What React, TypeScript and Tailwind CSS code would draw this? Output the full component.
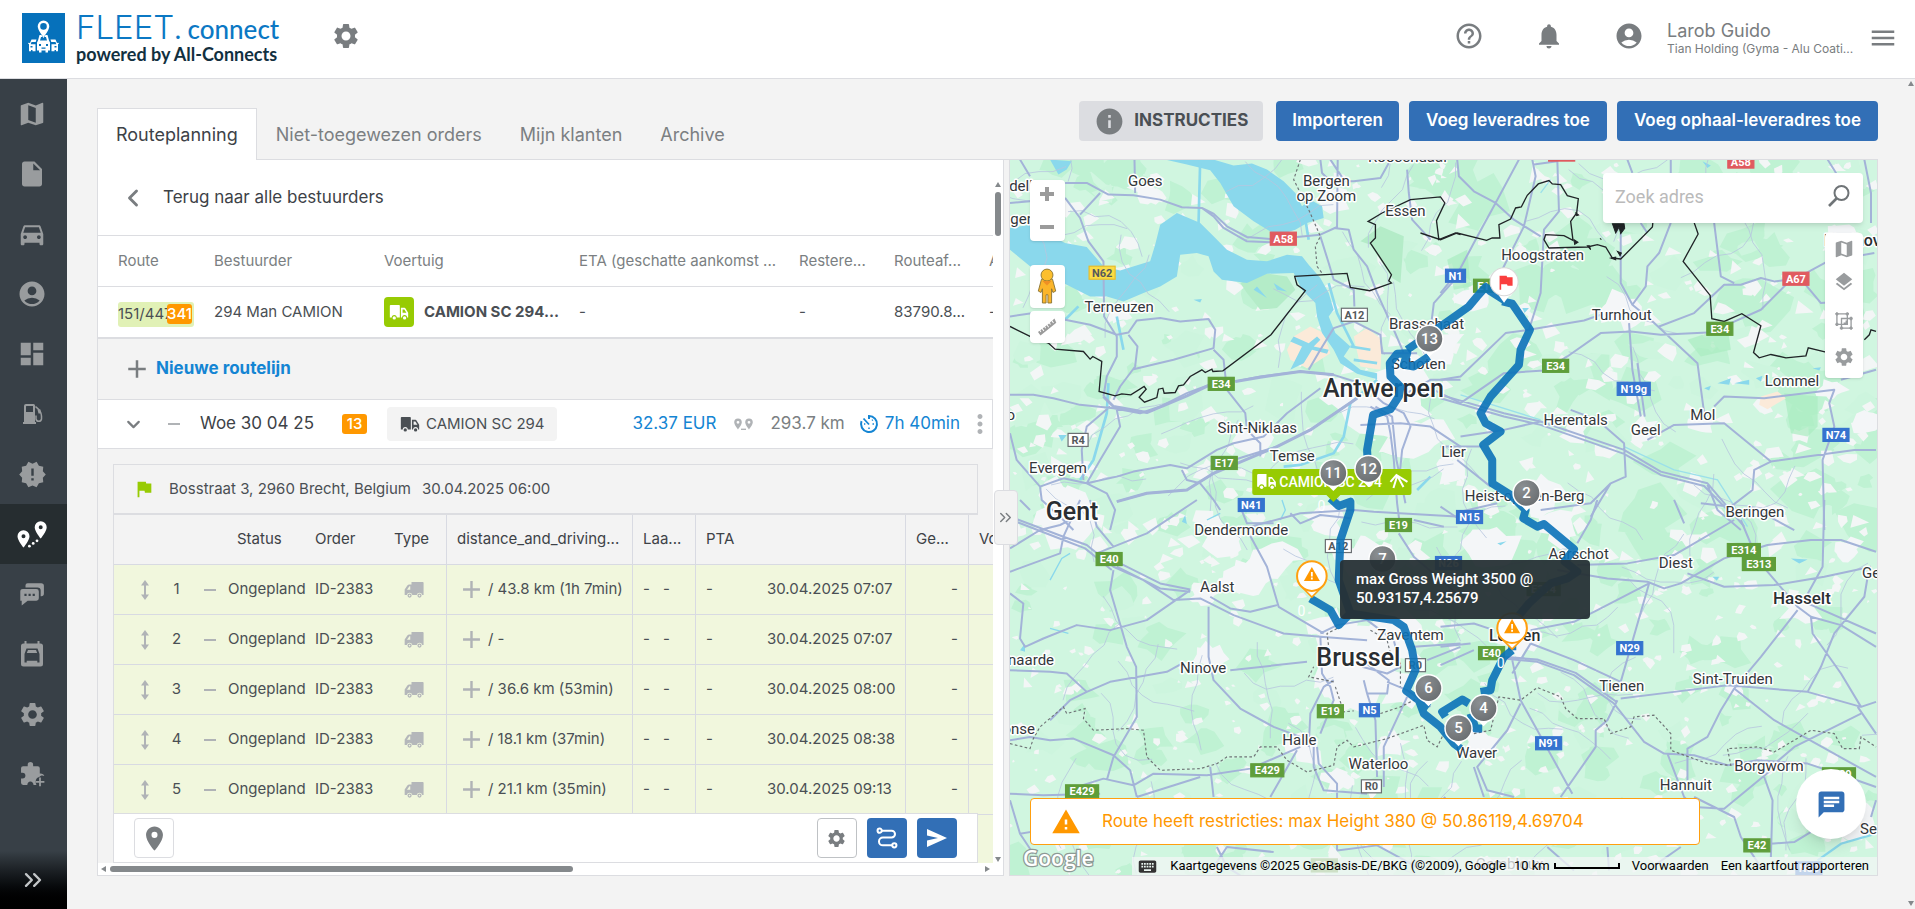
import React from "react";
import {
  MdSettings, MdHelpOutline, MdNotifications, MdAccountCircle, MdMenu, MdMap, MdInsertDriveFile,
  MdDirectionsCar, MdDashboard, MdNewReleases, MdFlag, MdInfo, MdWarning, MdLayers, MdKeyboard,
  MdLocationOn, MdChat, MdMoreVert, MdAdd,
} from "react-icons/md";
import { ChevronLeft, ChevronDown, ChevronsRight } from "lucide-react";

/* ---------- icons ---------- */

type IconProps = { className?: string };

const Truck = ({ className }: IconProps) => (
  <svg viewBox="0 0 24 21" fill="currentColor" className={className} aria-hidden="true">
    <path fillRule="evenodd" d="M2 2h10a1 1 0 0 1 1 1v14H9.3a3 3 0 0 0-6 0H1V3a1 1 0 0 1 1-1zM14.3 5.5h4.2a1.5 1.5 0 0 1 1.3.8L23 11.5V17h-1.3a3 3 0 0 0-6 0h-1.4zM16.3 7.5v4h4.6l-2.5-4z" />
    <circle cx="6.3" cy="17.6" r="2" />
    <circle cx="18.7" cy="17.6" r="2" />
  </svg>
);

const VanLeft = ({ className }: IconProps) => (
  <svg viewBox="0 0 24 20" fill="currentColor" className={className} aria-hidden="true">
    <path fillRule="evenodd" d="M9 1h13.5a1 1 0 0 1 1 1v14.5h-1.6a3.4 3.4 0 0 0-6.6 0H10a3.4 3.4 0 0 0-6.6 0H.8V10L4 5.2A3 3 0 0 1 6.4 4H9zM7.5 6h-1L3.6 10.2h3.9z" />
    <path fillRule="evenodd" d="M6.7 14.8a2.5 2.5 0 1 1 0 5 2.5 2.5 0 0 1 0-5zm0 1.5a1 1 0 1 0 0 2 1 1 0 0 0 0-2zM18.6 14.8a2.5 2.5 0 1 1 0 5 2.5 2.5 0 0 1 0-5zm0 1.5a1 1 0 1 0 0 2 1 1 0 0 0 0-2z" />
  </svg>
);

const RoutePins = ({ className }: IconProps) => (
  <svg viewBox="0 0 30 27" fill="currentColor" className={className} aria-hidden="true">
    <path fillRule="evenodd" d="M6.5 9.2a6 6 0 0 1 6 6c0 4.3-6 11.3-6 11.3s-6-7-6-11.3a6 6 0 0 1 6-6zm0 4a2 2 0 1 0 0 4 2 2 0 0 0 0-4zM23.7.3a6 6 0 0 1 6 6c0 4.3-6 11.3-6 11.3s-6-7-6-11.3a6 6 0 0 1 6-6zm0 4a2 2 0 1 0 0 4 2 2 0 0 0 0-4z" />
    <circle cx="12.4" cy="25.2" r="1.4" /><circle cx="16.2" cy="22.4" r="1.4" /><circle cx="20" cy="19.8" r="1.4" />
  </svg>
);

const SmallPins = ({ className }: IconProps) => (
  <svg viewBox="0 0 20 14" fill="currentColor" className={className} aria-hidden="true">
    <path fillRule="evenodd" d="M4 1.5a3.8 3.8 0 0 1 3.8 3.8C7.8 8 4 12.4 4 12.4S.2 8 .2 5.3A3.8 3.8 0 0 1 4 1.5zm0 2.4a1.4 1.4 0 1 0 0 2.8 1.4 1.4 0 0 0 0-2.8zM15 1.5a3.8 3.8 0 0 1 3.8 3.8c0 2.7-3.8 7.1-3.8 7.1s-3.8-4.4-3.8-7.1A3.8 3.8 0 0 1 15 1.5zm0 2.4a1.4 1.4 0 1 0 0 2.8 1.4 1.4 0 0 0 0-2.8z" />
    <path d="M7 11.6h5v1.4H7z" />
  </svg>
);

const FuelPump = ({ className }: IconProps) => (
  <svg viewBox="0 0 24 24" fill="currentColor" className={className} aria-hidden="true">
    <path fillRule="evenodd" d="M6 2h7.5A1.5 1.5 0 0 1 15 3.5V20h1v2H3v-2h1V4a2 2 0 0 1 2-2zm.5 2a.5.5 0 0 0-.5.5V10h7V4z" />
    <path d="M15.5 4.5c2.5 2 6 4.5 6 9.5v3a2.8 2.8 0 0 1-5.5 0v-3.5" fill="none" stroke="currentColor" strokeWidth="1.5" />
    <path d="M17.5 7.5h3v4h-2z" />
  </svg>
);

const Messages = ({ className }: IconProps) => (
  <svg viewBox="0 0 24 24" fill="currentColor" className={className} aria-hidden="true">
    <path d="M8 2h12.5A2.5 2.5 0 0 1 23 4.5v7a2.5 2.5 0 0 1-2.5 2.5H20V9a3 3 0 0 0-3-3H6V4a2 2 0 0 1 2-2z" />
    <path fillRule="evenodd" d="M3.5 7.3h12.5A2.3 2.3 0 0 1 18.3 9.6v6.3a2.3 2.3 0 0 1-2.3 2.3H8L2.5 22.5v-4.3H1.2V9.6a2.3 2.3 0 0 1 2.3-2.3zM5 11.8v2h2v-2zm3.8 0v2h2v-2zm3.8 0v2h2v-2z" />
  </svg>
);

const CarCalendar = ({ className }: IconProps) => (
  <svg viewBox="0 0 24 26" fill="currentColor" className={className} aria-hidden="true">
    <path fillRule="evenodd" d="M4.5 0h2v2.5h11V0h2v2.5h1A2.5 2.5 0 0 1 23 5v18a2.5 2.5 0 0 1-2.5 2.5h-17A2.5 2.5 0 0 1 1 23V5a2.5 2.5 0 0 1 2.5-2.5h1zM6.5 7.5 4.5 13v8.5h2.2v-1.8h10.6v1.8h2.2V13l-2-5.5zM8 9h8l1.2 3H6.8z" />
  </svg>
);

const PuzzlePlus = ({ className }: IconProps) => (
  <svg viewBox="0 0 24 24" fill="currentColor" className={className} aria-hidden="true">
    <path d="M10 0a2.6 2.6 0 0 1 2.6 2.6V4H17a2 2 0 0 1 2 2v5c2.5-.2 4 1 4.3 2.5-1.5-1-4-.5-4.8 1-2 .3-3.5 2-3.5 4.5 0 1 .2 2 .8 3H13c-.2-2-1.3-3.2-3-3.2S7.2 20 7 22H3a2 2 0 0 1-2-2v-4.2h1.4a2.8 2.8 0 0 0 0-5.6H1V6a2 2 0 0 1 2-2h4.4V2.6A2.6 2.6 0 0 1 10 0z" />
    <path d="M19.2 14.8v8.4M15 19h8.4" stroke="currentColor" strokeWidth="1.7" />
  </svg>
);

const DragArrows = ({ className }: IconProps) => (
  <svg viewBox="0 0 10 20" fill="currentColor" className={className} aria-hidden="true">
    <path d="M5 0l4 5.5H6v9h3L5 20l-4-5.500h3v-9H1z" />
  </svg>
);

const Magnifier = ({ className }: IconProps) => (
  <svg viewBox="0 0 24 24" fill="none" stroke="currentColor" className={className} aria-hidden="true">
    <circle cx="14.5" cy="9" r="7" strokeWidth="2" />
    <path d="M9.5 14.5 2 22" strokeWidth="2.6" />
  </svg>
);

const Timer = ({ className }: IconProps) => (
  <svg viewBox="0 0 20 20" fill="none" stroke="currentColor" className={className} aria-hidden="true">
    <path d="M10 5V2a8 8 0 1 1-7.5 5.2" strokeWidth="2" />
    <path d="m4.5 4.5 5.5 6" strokeWidth="1.8" />
    <path d="M13.5 10h1.5M5 10h1.3M10 13.5V15M13 6.5l.8-.8" strokeWidth="1.5" />
  </svg>
);

const RouteLine = ({ className }: IconProps) => (
  <svg viewBox="0 0 24 24" fill="none" stroke="currentColor" strokeWidth="2.2" className={className} aria-hidden="true">
    <circle cx="4" cy="4" r="2.3" /><circle cx="20" cy="20" r="2.3" />
    <path d="M6.3 4H17a3.5 3.5 0 0 1 0 7.5H7.5a4 4 0 0 0 0 8.500h10" />
  </svg>
);

const GroupIcon = ({ className }: IconProps) => (
  <svg viewBox="0 0 24 24" fill="none" stroke="currentColor" className={className} aria-hidden="true">
    <path d="M3.5 3.5h12.5v12.5H3.5z" strokeWidth="1.6" />
    <path d="M9 9h11.5v11.5H9z" strokeWidth="1.6" />
    <path d="M1.5 3.5h4M3.5 1.5v4M14 3.5h4M16 1.5v4M1.5 16h4M3.5 14v4" strokeWidth="2.2" />
    <path d="M18.5 20.5h4M20.5 18.5v4M18.5 9h4M20.5 7v4M7 20.5h4M9 18.5v4" strokeWidth="2.2" />
    <path d="M11.5 15h3.5v-3.5" strokeWidth="2.2" />
  </svg>
);

const RulerIcon = ({ className }: IconProps) => (
  <svg viewBox="0 0 20 20" fill="currentColor" className={className} aria-hidden="true">
    <path d="M1 15 2.5 13.8l1 1.4.8-.6-1-1.4 1.6-1.2 1.6 2.2.8-.6-1.6-2.2 1.6-1.3 1 1.4.8-.6-1-1.4 1.6-1.2 1.6 2.2.8-.6-1.6-2.2 1.6-1.3 1 1.4.8-.6-1-1.4L14.5 4l1.6 2.2.8-.6L15.3 3.4 17.5 1.5l1.8 4.3L3.5 18.5z" />
  </svg>
);

const LogoMark = () => (
  <svg viewBox="0 0 43 50" className="h-[50px] w-[43px]" aria-hidden="true">
    <path fill="#0671bb" d="M0 0h43v50H0z" />
    <g fill="#fff">
      <path fillRule="evenodd" d="M21.5 7.5a5.8 5.8 0 0 1 5.8 5.8c0 4-5.8 11-5.8 11s-5.8-7-5.8-11a5.8 5.8 0 0 1 5.8-5.8zm0 2.6a3.3 3.3 0 1 0 0 6.6 3.3 3.3 0 0 0 0-6.6z" />
      <path fillRule="evenodd" d="M17.5 22h2l2 3 2-3h2l1.5 5.500 1 2v8h-2v2h-2.500v-2h-4v2H17v-2h-2v-8l1-2zm.5 5.500h7l-1-3.500h-5zM17 31v2h2v-2zm7 0v2h2v-2zm-4.500 3.500v1.200h4v-1.200z" />
      <path fillRule="evenodd" d="M9.5 26.500h5l-.8 2.500h-4.200l-.8 2.200h4.800v7h-3v-1.200H9v1.200H7v-7l-1-.6.6-.9 1.400.3zM8.500 33v1.500h2V33zM33.500 26.500h-5l.8 2.500h4.200l.8 2.200h-4.800v7h3v-1.200H34v1.200h2v-7l1-.6-.6-.9-1.400.3zM34.500 33v1.500h-2V33z" />
    </g>
  </svg>
);

/* ---------- map ---------- */

function makeRandom(seed: number) {
  let s = seed;
  return () => {
    s = (s * 1664525 + 1013904223) % 4294967296;
    return s / 4294967296;
  };
}

function blob(rand: () => number, cx: number, cy: number, r: number, n: number) {
  let d = "";
  for (let i = 0; i < n; i++) {
    const a = (i / n) * Math.PI * 2 + rand() * 0.5;
    const k = r * (0.45 + rand() * 0.75);
    d += (i ? "L" : "M") + (cx + Math.cos(a) * k).toFixed(1) + " " + (cy + Math.sin(a) * k * 0.8).toFixed(1);
  }
  return d + "Z";
}

const rnd = makeRandom(77);
let forest = "";
let meadow = "";
let patches = "";
let lanes = "";
for (let i = 0; i < 260; i++) {
  const x = 1010 + rnd() * 865;
  const y = 160 + rnd() * 715;
  forest += blob(rnd, x, y, 8 + rnd() * (x > 1440 && y < 560 ? 30 : 17), 9);
}
for (let i = 0; i < 90; i++) meadow += blob(rnd, 1010 + rnd() * 865, 160 + rnd() * 715, 8 + rnd() * 20, 8);
for (let i = 0; i < 900; i++) {
  const x = 1010 + rnd() * 865;
  const y = 160 + rnd() * 715;
  const dense = y < 560 ? 10 : 6;
  patches += blob(rnd, x, y, 2 + rnd() * dense, 3 + Math.floor(rnd() * 4));
}
for (let i = 0; i < 95; i++) {
  let x = 1010 + rnd() * 865;
  let y = 160 + rnd() * 715;
  let a = rnd() * 6.28;
  lanes += `M${x.toFixed(0)} ${y.toFixed(0)}`;
  for (let k = 0; k < 7; k++) {
    a += (rnd() - 0.5) * 1.1;
    x += Math.cos(a) * 14;
    y += Math.sin(a) * 14;
    lanes += `L${x.toFixed(0)} ${y.toFixed(0)}`;
  }
}
const urbanSpots: [number, number, number][] = [
  [1385, 410, 44], [1400, 380, 36], [1420, 440, 32], [1345, 395, 26], [1070, 520, 38], [1060, 500, 30], [1082, 470, 14],
  [1365, 665, 52], [1385, 640, 42], [1350, 690, 32], [1330, 630, 26], [1400, 690, 26], [1305, 750, 22], [1257, 440, 22],
  [1625, 310, 26], [1440, 345, 24], [1270, 560, 30], [1250, 575, 26], [1225, 540, 22], [1120, 315, 14], [1145, 190, 16], [1332, 200, 18],
  [1520, 640, 22], [1800, 610, 24], [1840, 240, 22], [1205, 595, 16], [1210, 655, 18], [1640, 430, 18], [1575, 430, 16],
  [1470, 300, 18], [1480, 740, 20], [1855, 820, 22], [1675, 560, 12], [1865, 420, 18], [1735, 690, 10], [1540, 500, 28],
  [1560, 530, 26], [1490, 545, 28], [1325, 520, 22], [1360, 560, 26], [1830, 390, 16], [1340, 780, 18], [1700, 425, 14],
  [1390, 745, 18], [1450, 470, 18], [1845, 550, 18],
];
let urban = "";
urbanSpots.forEach(([x, y, r]) => { urban += blob(rnd, x, y, r, 13); });

const majorNW =
  "M195 100L260 100 325 135 400 137 480 150 545 173 605 175 640 200 670 235 740 275 810 278M605 175L640 192 680 230 740 262 810 268M890 262L960 255 1010 232 1012 30M195 145L240 205 265 275 310 335 312 500 350 560 350 620 320 680 310 740M300 130L240 195M403 30L405 130M30 160L90 155M30 500L100 490M195 510L270 525 350 555 385 548 410 512 480 505 540 515 625 508 645 540 640 595 520 630 400 658M640 600L670 630 680 720 735 790 740 840 780 880 780 920M385 555L412 590 405 650 360 710 340 750M30 735L100 735 160 745 240 765 340 775 420 790 480 770 560 730 640 700M705 695L780 680 900 665 1000 675 1080 700 1150 760M350 1055L440 1030 560 1020 640 970 700 930 830 890 930 840 1070 745M260 1000L350 980 400 965 510 945 560 955 650 900 700 880 790 860 860 790 960 715M545 960L560 990 600 1000 640 1050 660 1080M1110 770L1160 800 1170 850 1180 930 1190 1060 1200 1140M1125 770L1175 800 1188 930 1215 1060M1080 825L1200 820 1290 830 1380 890M1150 760L1210 790 1230 830 1205 900 1195 1000M1380 690L1290 690 1200 740M1205 740L1300 720 1380 760M925 660L960 600 1000 535 1060 515 1140 555 1145 610 1250 610M960 260L985 340 1000 390 1060 420 1062 470M1000 235L1045 240 1060 300 1100 350 1130 430 1180 540 1210 610M1290 540L1300 460 1380 370M120 1010L190 985 260 1000 320 1030 345 1080 330 1140M120 1010L125 1050 190 1110 220 1140M30 850L50 930 120 1010M330 770L260 830 245 900 250 990M350 780L360 830 300 930 260 1000M750 1130L900 1090 1060 1080 1120 1085 1380 1100M960 30L965 70 990 95 1060 95 1140 85 1165 40M990 30L1030 90M1220 60L1225 130 1235 210 1290 270M60 30L90 80";
const majorNE =
  "M0 430L60 355 105 270 165 160 235 30M275 30L285 80 250 230 180 370M350 30L355 185 310 240 300 430 265 540M50 30L55 80 100 125 165 160 220 210 300 260M265 540L430 512 480 495M60 760L190 670 310 662 380 620 480 550 570 545 660 555 800 548M870 520L960 480 1040 400 1160 335 1300 310M0 690L60 680 195 550 265 540M0 735L190 790 300 815 550 900 660 965 800 1000 910 1130M0 745L190 800 300 825 550 912 660 975 790 1008 860 1080M540 250L540 400 575 465 630 510 770 640 790 790M690 220L655 310 620 350 615 410 575 465M565 520L575 660 600 800M590 640L612 800M655 530L760 490 850 405 900 405 960 385 1000 395 1040 390M820 220L840 380 880 400M1090 400L1140 460 1200 455M390 780L470 810 550 880 555 980 510 1000 450 1100M620 870L700 825 850 820 990 935 1240 900 1305 900M820 770L850 740 970 745 1180 720 1165 760 1180 830 1145 930 1150 1140M0 890L100 890 125 890M50 930L150 1010M60 860L190 840 300 815M990 935L940 960 935 1020 870 1070 780 1060M60 1085L170 1060M300 1080L450 1060 510 1000M1270 30L1290 130 1290 220M1200 690L1305 660M560 30L575 70M690 30L690 70M280 45L350 35M1160 30L1210 110M600 220L620 250M800 1005L830 1080 900 1140";
const majorSW =
  "M30 50L190 110 260 135 340 200 430 240 520 300 600 295 700 345 850 400 960 410 1100 420M30 58L190 120 255 145 335 210M30 215L180 160 190 110 240 0M30 145L120 90 180 75 230 50M290 160L440 100 590 0M60 0L90 30M270 0L290 80 340 140M350 200L480 265 570 275M360 190L480 250 570 268M340 210L330 270 380 440 408 500 410 650 340 770 320 840M30 510L150 515 200 520 260 575 330 545 500 515 545 490M30 280L70 310 60 415 75 440 130 415 230 375 330 390 440 360 570 270M150 660L210 600 260 575M625 320L625 470 640 540 720 625 820 680 900 710M735 80L800 200 835 320 970 400M630 290L690 325 750 335 830 315M690 510L920 485M30 720L90 710 150 720 220 715 280 740 340 765 390 810 410 890M30 880L130 885 300 880M200 870L310 835 400 855 460 820 620 825 750 805 900 740M410 890L600 830M640 890L630 800M810 890L890 750M925 740L930 640 970 560 1000 540M950 740L955 790 1010 850 1010 1050M940 740L940 800 970 870 1100 880M960 410L965 520 990 560 1000 600 960 700M960 400L1010 375 1100 360 1180 420 1200 500 1160 520 1085 500M1090 540L1100 580 1160 580 1165 540 1085 480M1160 545L1220 570 1290 620M1100 580L1125 660 1130 830M1220 590L1150 740 1150 860M1380 430L1240 440M30 900L60 1000 100 1060M60 1000L120 990M640 1100L680 1040 820 1055M1010 1050L1130 1035 1250 1100M1195 100L1240 170 1380 290M870 40L900 70 960 45 1050 55M1240 60L1330 80M720 20L740 70 820 70M1380 60L1320 20M1280 480L1380 440M650 1040L680 1100 720 1125M1380 940L1330 890";
const majorSE =
  "M350 210L500 235 620 245 670 265 720 250 850 175 980 135 1110 120 1200 120 1305 155M0 440L90 430M190 475L290 485 400 525 520 610 610 725 670 760 760 765 860 795 950 780 1100 790 1220 830 1305 860M190 470L290 478 405 518 525 603M270 430L400 480 540 545 625 250M270 390L400 365 470 330 625 250M540 595L700 575 860 555 1100 575 1260 620 1305 605M880 565L840 630 800 710 740 745 740 840M880 565L1000 660 1305 830M900 60L950 180 1070 320 1110 350 1200 375 1305 440M880 60L700 165 560 190 410 195M740 220L850 260 1000 255 1150 230 1290 200M1070 330L960 470 880 565M1110 350L1115 400 1200 520 1260 620M1090 300L1145 200 1150 0M1100 310L1305 400M1100 575L1140 500 1180 400 1270 290 1280 230M530 600L500 660 465 690 465 740 360 890M215 480L240 600 290 690 395 880M270 430L215 520M240 610L200 690 110 800 140 870 220 890M100 800L130 890M680 760L730 890 760 920 850 925 990 810M760 890L880 950 900 1010 960 1100M970 830L995 900 990 1070M1250 620L1305 700M1260 640L1060 740 990 800M990 1030L1060 1025 1200 940M0 380L100 370 160 390M0 495L100 450M320 1040L400 1110M720 1040L620 1110M500 1040L505 1110M930 20L1060 90M410 130L450 60 470 0M700 0L730 70M1305 900L1290 950";

const trunkNW = "M310 740L340 770 440 788 560 738 640 700M705 695L780 682 900 665 1000 675M350 1055L440 1030 560 1020 640 970 830 890 930 840 1070 745";

type Label = [string, number, number, ("start" | "end")?];
const towns: Label[] = [
  ["Goes", 1145, 181], ["Bergen", 1326, 181], ["op Zoom", 1326, 196], ["Roosendaal", 1407, 157], ["Essen", 1405, 211],
  ["Hoogstraten", 1542, 255], ["Terneuzen", 1119, 307], ["Turnhout", 1621, 315], ["Brasschaat", 1426, 324],
  ["Schoten", 1418, 364], ["Sint-Niklaas", 1257, 428], ["Temse", 1292, 456], ["Evergem", 1058, 468], ["Lier", 1453, 452],
  ["Herentals", 1575, 420], ["Geel", 1645, 430], ["Mol", 1702, 415], ["Lommel", 1791, 381], ["Beringen", 1754, 512],
  ["Heist-op-den-Berg", 1524, 496], ["Dendermonde", 1241, 530], ["Aalst", 1217, 587], ["Aarschot", 1578, 554],
  ["Diest", 1675, 563], ["Genk", 1861, 573, "start"], ["Zaventem", 1410, 635], ["Ninove", 1203, 668],
  ["Oudenaarde", 1054, 660, "end"], ["Ronse", 1035, 729, "end"], ["Halle", 1299, 740], ["Waterloo", 1378, 764],
  ["Waver", 1476, 753], ["Tienen", 1621, 686], ["Sint-Truiden", 1732, 679], ["Hannuit", 1685, 785],
  ["Borgworm", 1768, 766], ["Gembloux", 1509, 864], ["Seraing", 1859, 829, "start"], ["Middelburg", 984, 186, "start"],
  ["Vlissingen", 1035, 219, "end"], ["Eeklo", 1015, 415, "end"],
];

type Shield = [string, number, number, "g" | "b" | "r" | "y" | "w"];
const shields: Shield[] = [
  ["A58", 1283, 239, "r"], ["N62", 1102, 273, "y"], ["A12", 1354, 315, "w"], ["N1", 1455, 276, "b"], ["E34", 1221, 384, "g"],
  ["R4", 1078, 440, "w"], ["E17", 1224, 463, "g"], ["N41", 1251, 505, "b"], ["E19", 1398, 525, "g"], ["A12", 1338, 546, "w"],
  ["E40", 1109, 559, "g"], ["E19", 1330, 711, "g"], ["N5", 1369, 710, "b"], ["R0", 1415, 665, "w"], ["R0", 1371, 786, "w"],
  ["E429", 1267, 770, "g"], ["E429", 1082, 791, "g"], ["E19", 1486, 286, "g"], ["A67", 1795, 279, "r"], ["E34", 1719, 329, "g"],
  ["E34", 1555, 366, "g"], ["N19g", 1633, 389, "b"], ["N74", 1835, 435, "b"], ["N15", 1469, 517, "b"], ["E314", 1743, 550, "g"],
  ["E313", 1758, 564, "g"], ["N29", 1629, 648, "b"], ["E40", 1491, 653, "g"], ["N91", 1548, 743, "b"], ["E42", 1756, 845, "g"],
  ["N26", 1448, 563, "b"], ["E429", 1838, 774, "g"], ["A58", 1740, 162, "r"], ["A58", 1561, 155, "r"], ["E314", 1543, 589, "g"],
  ["E19", 1324, 865, "g"], ["N80", 1808, 868, "b"],
];
const shieldColor = { g: "#5f9e3b", b: "#3573cf", r: "#e05a5f", y: "#fbdc45", w: "#ffffff" };

const stops: [string, number, number][] = [
  ["7", 1382, 559], ["13", 1429, 339], ["12", 1368, 469], ["11", 1333, 473], ["2", 1526, 493], ["6", 1428, 688], ["4", 1483, 708], ["5", 1458, 728],
];

const Q1 = "translate(1000 150) scale(.33333)";
const Q2 = "translate(1440 150) scale(.33333)";
const Q3 = "translate(1000 500) scale(.33333)";
const Q4 = "translate(1440 500) scale(.33333)";

function MapDrawing() {
  const halo = { stroke: "#fff", strokeWidth: 3, strokeLinejoin: "round" as const, paintOrder: "stroke" as const };
  return (
    <svg viewBox="1010 160 866 715" preserveAspectRatio="xMidYMid slice" className="absolute inset-0 h-full w-full" role="img" aria-label="Routekaart">
      <defs>
        <radialGradient id="stopFill" cx=".35" cy=".3" r=".8">
          <stop offset="0" stopColor="#8b8f92" /><stop offset="1" stopColor="#686c6f" />
        </radialGradient>
      </defs>
      <path d="M1010 160h866v715h-866z" fill="#d0f6e0" />
      <path d={forest} fill="#bff2d3" />
      <path d={meadow} fill="#cdf5de" />
      <path d={patches} fill="#f3f6f6" />
      <path d={urban} fill="#f4f6f8" />
      <g transform={Q1}>
        <path fill="#b4ecc8" d="M1080 275L1140 230 1210 260 1200 400 1175 385 1110 285zM720 400L790 370 860 380 885 420 830 475 780 480 740 430z" />
        <path fill="#fbead9" d="M860 600L880 560 930 530 970 550 990 610 920 655 870 630zM1060 560L1100 535 1145 570 1140 660 1080 650z" />
        <g fill="#8ad8ec">
          <path d="M30 235L90 225 195 280 260 292 310 350 360 362 450 335 465 285 480 225 530 190 600 220 640 260 680 300 740 330 800 335 860 315 905 320 925 345 960 385 985 430 1000 480 985 500 1005 550 1050 590 1030 620 1080 660 1130 670 1130 688 1070 672 1020 640 1000 600 965 550 950 500 945 460 905 420 880 370 800 372 740 400 665 390 640 365 625 320 590 310 540 315 530 380 480 410 430 430 370 455 320 440 270 440 240 425 190 400 90 350 30 300z" />
          <path d="M495 30L640 30 700 48 755 42 800 60 850 95 885 130 905 170 930 150 965 170 970 205 920 220 885 240 830 258 760 215 700 170 660 100 630 62 560 45z" />
          <path d="M150 30L215 35 200 60 175 75zM870 660L905 590 870 575 880 560 925 580 950 560 960 570 940 590 985 600 980 612 935 600 910 640zM175 855L200 855 185 875zM580 450L605 448 600 458zM760 420L770 410 800 445zM820 400L860 425 830 420z" />
        </g>
        <path fill="none" stroke="#8ad8ec" strokeWidth="8" d="M1130 690L1050 760 1030 860 1000 910 900 945 850 950M325 700L320 790 280 930 240 990M985 400L1010 490 1060 590M1050 590L1110 600M1060 630L1130 640M235 470L195 510M600 30L595 220M925 270L910 180M350 500L370 600M1290 980L1250 1020" />
      </g>
      <g transform={Q2} fill="#8ad8ec">
        <path d="M830 700L870 685 865 705zM880 700L925 690 925 705zM945 685L965 678 960 695zM790 715L810 708 805 722zM1115 655L1140 652 1135 662zM245 475L265 475 252 490zM785 35L810 48 800 55z" />
        <path fill="#a9ecc1" opacity=".7" d="M1030 730L1130 740 1130 830 1100 860 1050 850zM740 570L860 530 870 600 780 620zM20 330L80 300 90 410 40 420z" />
        <path fill="none" stroke="#9be0ea" strokeWidth="4" d="M60 735L300 810M550 890L700 960 830 990 920 1130M330 90L300 130" />
        <path fill="#fbead9" d="M960 740L1010 725 1035 745 980 778 955 765z" />
      </g>
      <g transform={Q4} fill="#8ad8ec">
        <path d="M1050 175L1100 178 1075 190zM815 230L835 230 828 242zM170 130L198 124 180 136z" />
        <path fill="none" stroke="#8ad8ec" strokeWidth="7" d="M1305 1000L1200 1030 1130 1080" />
      </g>
      <g transform={Q3} fill="#8ad8ec">
        <path d="M545 65L555 45 560 72zM60 450L75 430 75 455z" />
        <path fill="none" stroke="#8ad8ec" strokeWidth="4" d="M150 240L185 175 210 160M845 0L855 30 840 60M150 385L205 400M620 60L660 40" />
      </g>
      <path d={lanes} fill="none" stroke="#b7c5df" strokeWidth="0.8" />
      <g fill="none" stroke="#a3b3d8" strokeWidth="6" strokeLinejoin="round">
        <g transform={Q1}><path d={majorNW} /><path d={trunkNW} strokeWidth="9" /></g>
        <g transform={Q2}><path d={majorNE} /></g>
        <g transform={Q3}><path d={majorSW} /></g>
        <g transform={Q4}><path d={majorSE} /></g>
      </g>
      <g fill="none" stroke="#6f7477" strokeWidth="3.5" strokeDasharray="8 7">
        <path transform={Q1} d="M900 30L880 90 925 180 960 260 945 290 950 350 965 370" />
        <path transform={Q3} d="M30 730L90 745 100 715 120 680 190 620 200 640 255 625 250 655 280 690 380 685 430 690 440 770 480 810 600 805 650 790 680 770 760 770 780 740 830 740 860 780 920 815 1000 795 1010 740 1040 720 1060 740 1160 715 1270 675 1280 720 1310 740 1340 680M1010 385L980 400 985 440M1000 545L925 530 940 500M1005 560L1030 635 1060 632M1140 640L1200 620 1260 590M1110 390L1160 420 1170 460 1200 490 1200 560" />
        <path transform={Q4} d="M100 700L150 690 175 590 240 600 290 562 360 590 375 625 410 655 490 655 510 700 570 680 580 650 640 645 690 700 690 750 800 790 870 795 860 745 950 740 1000 755 1060 720 1110 690 1180 700 1205 745 1255 745 1260 710 1305 740" />
      </g>
      <g fill="none" stroke="#202427" strokeWidth="4">
        <path transform={Q1} d="M30 530L90 560 145 580 165 598 250 605 270 628 278 620 305 635 297 725 345 738 365 732 392 735 432 710 438 718 417 742 433 757 470 743 475 718 488 715 492 730 525 728 535 708 550 705 570 680 605 660 615 668 635 658 638 665 668 663 812 555 915 423 890 405 883 380 1040 371 1050 413 1108 423 1173 400 1165 393 1173 375 1110 280 1125 265 1125 225 1103 215 1145 190 1230 150 1320 142 1333 160 1308 213 1315 270 1365 250 1380 255" />
        <path transform={Q2} d="M-60 250L0 270 50 250 138 272 155 265 178 265 175 225 210 208 225 175 242 172 260 137 293 103 325 93 335 103 360 105 380 138 413 147 408 190 390 215 397 272 370 258 315 255 310 270 325 295 440 292 470 285 495 292 515 325 540 328 635 232 640 180M757 210L772 253 727 335 808 437 813 507 850 515 903 492 960 528 938 608 955 624 990 614 1035 624 1095 618 1102 594 1155 607M1270 570L1285 555 1290 540 1305 545" />
        <path transform={Q2} fill="#202427" strokeWidth="3" d="M515 222L525 250 535 232 540 252 552 236 550 222zM400 270L412 278 402 284zM440 288L450 300 446 288zM510 325L525 330 525 322zM530 305L542 310 538 318zM478 266L482 270zM406 190L414 196 408 198z" />
      </g>
      <g fontFamily="Roboto, sans-serif" fontWeight="400" fontSize="15" fill="#33373b" {...halo}>
        {towns.map(([t, x, y, a]) => (
          <text key={t} x={x} y={y + 5} textAnchor={a ?? "middle"}>{t}</text>
        ))}
      </g>
      <g fontFamily="Roboto, sans-serif" fontWeight="500" fill="#2a2e32" textAnchor="middle" {...halo}>
        <text x="1383" y="397" fontSize="25">Antwerpen</text>
        <text x="1072" y="520" fontSize="25">Gent</text>
        <text x="1358" y="666" fontSize="25">Brussel</text>
        <text x="1801" y="604" fontSize="17">Hasselt</text>
        <text x="1514" y="641" fontSize="16">Leuven</text>
        <text x="1823" y="246" fontSize="16" textAnchor="start">Eindhoven</text>
      </g>
      <g fontFamily="Roboto, sans-serif" fontWeight="700" fontSize="11" textAnchor="middle">
        {shields.map(([t, x, y, c], i) => {
          const w = t.length * 6 + (t.length > 3 ? 9 : 8);
          return (
            <g key={i}>
              <rect x={x - w / 2} y={y - 6.5} width={w} height="13" fill={shieldColor[c]} stroke={c === "w" ? "#6b6f73" : c === "y" ? "#e8bd2b" : shieldColor[c]} strokeWidth="1.2" />
              <text x={x} y={y + 4} fill={c === "w" || c === "y" ? "#55595c" : "#fff"}>{t}</text>
            </g>
          );
        })}
      </g>
      <g fill="none" stroke="#0b72b8" strokeOpacity=".9" strokeWidth="24" strokeLinejoin="round">
        <path transform={Q2} d="M190 450L150 425 135 412 110 440 85 470 0 530 -100 600M185 455L215 462 268 540 240 600 235 645 150 740 120 790 135 820 180 845 128 885 155 930 155 1000 210 1035 255 1080 248 1105 290 1130 310 1122 400 1197 372 1235 410 1265 380 1285 330 1300 265 1360 215 1420 215 1500" />
        <path transform={Q1} d="M1285 620L1240 650 1210 645 1220 610 1190 612 1168 640 1170 680 1200 710 1195 740 1170 778 1118 795 1100 900 1105 1000M990 1045L1015 1068 1050 1055 1050 1080 1020 1170 1015 1290 1050 1390 1180 1410 1210 1430 1235 1500 1245 1560 1217 1622 1255 1650 1270 1690 1320 1730 1360 1780 1380 1795M930 1345L990 1380 1015 1425 1050 1390M1225 1628L1285 1672M1335 1700L1325 1685 1385 1648 1405 1660" />
        <path transform={Q4} d="M215 450L190 470 155 540 150 570 120 575M125 685L105 685 90 640" />
      </g>

      {/* vehicle flag */}
      <path d="M1254 469h155a2 2 0 0 1 2 2v22a2 2 0 0 1-2 2h-69l-7 7-7-7h-72a2 2 0 0 1-2-2v-22a2 2 0 0 1 2-2z" fill="#97cb03" />
      <g transform="translate(1256 474) scale(.85)" fill="#fff">
        <path fillRule="evenodd" d="M2 0h10v15H9.3a3 3 0 0 0-6 0H1V1zM14.3 3.5h4.2L23 9.5V15h-1.3a3 3 0 0 0-6 0h-1.4zM16.3 5.5v4h4.6l-2.5-4z" />
        <circle cx="6.3" cy="15.6" r="2" /><circle cx="18.7" cy="15.6" r="2" />
      </g>
      <text x="1279" y="487" fontFamily="Roboto, sans-serif" fontWeight="500" fontSize="14" fill="#fff">CAMION SC 294</text>
      <path d="M1393 488l4-13M1390 482l6-7 11 7M1397 476l6 11" stroke="#fff" strokeWidth="2" fill="none" />

      {stops.map(([n, x, y]) => (
        <g key={n}>
          <path d={`M${x - 6} ${y + 12}L${x} ${y + 18}L${x + 6} ${y + 12}z`} fill="#fff" />
          <circle cx={x} cy={y} r="13.5" fill="url(#stopFill)" stroke="#fff" strokeWidth="1.5" />
          <text x={x} y={y + 5} textAnchor="middle" fontFamily="Roboto, sans-serif" fontWeight="500" fontSize="15" fill="#fff">{n}</text>
        </g>
      ))}
      <path d="M1497 294l6.5 9 6.5-9z" fill="#fff" />
      <circle cx="1503.5" cy="282" r="14" fill="#fff" stroke="#d9d9d9" strokeWidth="1" />
      <path d="M1499 276h7l.6 1.6h5.4v8.5h-5l-.6-1.6h-5.800v5.500H1499z" fill="#fa3e3e" />
      {[[1311.5, 576], [1511.5, 628]].map(([x, y]) => (
        <g key={x}>
          <path d={`M${x - 8} ${y + 13}L${x} ${y + 21}L${x + 8} ${y + 13}z`} fill="#fff" stroke="#ff9f0f" strokeWidth="1.5" />
          <circle cx={x} cy={y} r="14.8" fill="#fff" stroke="#ff9f0f" strokeWidth="2" />
          <path d={`M${x - 8} ${y + 5}L${x} ${y - 9}L${x + 8} ${y + 5}z`} fill="#ff9800" />
          <path d={`M${x} ${y - 4}v4.5M${x} ${y + 1.5}v2`} stroke="#fff" strokeWidth="1.8" />
        </g>
      ))}
      <g fontFamily="Roboto, sans-serif" fontSize="14" fill="#fff" textAnchor="middle">
        <text x="1321" y="511">0</text><text x="1301" y="616">0</text><text x="1500" y="668">0</text>
      </g>

      {/* wordmark */}
      <text x="1023" y="866" fontFamily="'Open Sans', sans-serif" fontWeight="600" fontSize="21" fill="#fff" stroke="#8d9a95" strokeWidth="2.5" paintOrder="stroke">Google</text>
    </svg>
  );
}

function Pegman() {
  return (
    <svg viewBox="0 0 24 40" className="h-[37px] w-[22px]" aria-hidden="true">
      <g stroke="#8a7433" strokeWidth="1">
        <path d="M6 12h12l3.5 13-3 1.5-1.5-4V38h-4v-9h-2v9H7V22.5l-1.5 4-3-1.5z" fill="#fbb52a" />
        <circle cx="12" cy="7.5" r="6.5" fill="#fcbf2d" />
      </g>
      <path d="M7 14h10l-5 5z" fill="#ef8f24" />
    </svg>
  );
}

function ZoomSign({ d }: { d: string }) {
  return <svg viewBox="0 0 14 14" className="h-[14px] w-[14px]" aria-hidden="true"><path d={d} stroke="currentColor" strokeWidth="4" /></svg>;
}

function MapPanel() {
  return (
    <section className="relative min-w-0 flex-[868] overflow-hidden border-x border-b border-[#dcdde1] bg-[#d0f6e0]">
      <MapDrawing />

      <div className="absolute left-5 top-5 flex w-[35px] flex-col rounded bg-white text-[#9b9b9b] shadow">
        <button aria-label="Inzoomen" className="flex h-[28px] items-center justify-center"><ZoomSign d="M0 7h14M7 0v14" /></button>
        <button aria-label="Uitzoomen" className="flex h-[33px] items-center justify-center"><ZoomSign d="M0 9h14" /></button>
      </div>
      <div className="absolute left-5 top-[105px] flex flex-col gap-[3px]">
        <button aria-label="Straatweergave" className="flex h-[43px] w-[35px] items-center justify-center rounded-sm bg-white shadow"><Pegman /></button>
        <button aria-label="Meten" className="flex h-8 w-[35px] items-center justify-center rounded-sm bg-white text-[#9b9b9b] shadow"><RulerIcon className="h-5 w-5" /></button>
      </div>

      <label className="absolute right-[14px] top-[13px] flex h-[50px] w-[260px] items-center rounded-sm bg-white pb-1 pl-3 pr-3 shadow-md">
        <span className="sr-only">Zoek adres</span>
        <input type="text" placeholder="Zoek adres" className="min-w-0 flex-1 bg-transparent font-['Roboto',sans-serif] text-[18px] text-[#4a4f54] outline-none placeholder:text-[#bababa]" />
        <Magnifier className="h-6 w-6 text-[#6f7477]" />
      </label>

      <div className="absolute right-[14px] top-[73px] flex h-[145px] w-[38px] flex-col items-center justify-between rounded bg-white px-2 pb-[10px] pt-[5px] text-[#999c9e] shadow">
        <button aria-label="Kaarttype"><MdMap size={22} /></button>
        <button aria-label="Lagen"><MdLayers size={22} /></button>
        <button aria-label="Groeperen" className="mt-2"><GroupIcon className="h-5 w-5" /></button>
        <button aria-label="Kaartinstellingen" className="mt-1"><MdSettings size={22} /></button>
      </div>

      <div role="tooltip" className="absolute left-[330px] top-[400px] h-[59px] w-[250px] rounded bg-[#263035]/95 px-4 py-[10px] font-['Roboto',sans-serif] text-[15px] font-medium leading-[19px] text-white">
        max Gross Weight 3500 @ 50.93157,4.25679
      </div>

      <div role="alert" className="absolute bottom-[30px] left-5 right-[177px] flex h-[47px] items-center gap-[21px] rounded border border-[#ff9f0f] bg-white pl-5 text-[17px] text-[#ff9800]">
        <MdWarning size={30} />
        <span>Route heeft restricties: max Height 380 @ 50.86119,4.69704</span>
      </div>

      <button aria-label="Chat" className="absolute bottom-[36px] right-[11px] flex h-[70px] w-[70px] items-center justify-center rounded-full bg-white text-[#326fb6] shadow-lg">
        <MdChat size={31} />
      </button>

      <div className="absolute bottom-0 right-0 flex h-[18px] items-center whitespace-nowrap bg-[#f3f6f5]/75 pl-[5px] pr-2 font-['Roboto',sans-serif] text-[13px] text-black">
        <button aria-label="Sneltoetsen" className="mr-3"><MdKeyboard size={21} className="text-[#333]" /></button>
        <span className="mr-2">Kaartgegevens ©2025 GeoBasis-DE/BKG (©2009), Google</span>
        <span className="mr-1">10 km</span>
        <span className="mr-3 h-[6px] w-[66px] border-x-2 border-b-2 border-black" />
        <a href="#voorwaarden" className="mr-3">Voorwaarden</a>
        <a href="#kaartfout">Een kaartfout rapporteren</a>
      </div>
    </section>
  );
}

/* ---------- left panel ---------- */

const legs = [
  { n: 1, dist: "/ 43.8 km (1h 7min)", at: "30.04.2025 07:07" },
  { n: 2, dist: "/ -", at: "30.04.2025 07:07" },
  { n: 3, dist: "/ 36.6 km (53min)", at: "30.04.2025 08:00" },
  { n: 4, dist: "/ 18.1 km (37min)", at: "30.04.2025 08:38" },
  { n: 5, dist: "/ 21.1 km (35min)", at: "30.04.2025 09:13" },
];

function DriverTable() {
  return (
    <table className="w-[1010px] table-fixed border-separate border-spacing-0 text-left text-[15px] text-[#4a4f54]">
      <colgroup>
        <col className="w-[106px]" /><col className="w-[170px]" /><col className="w-[195px]" /><col className="w-[220px]" />
        <col className="w-[95px]" /><col className="w-[95px]" /><col className="w-[129px]" />
      </colgroup>
      <thead>
        <tr className="h-[51px] whitespace-nowrap text-[#7b7f82] [&>th]:border-b [&>th]:border-[#dcdde1] [&>th]:pl-[10px] [&>th]:font-normal">
          <th className="!pl-5">Route</th><th>Bestuurder</th><th>Voertuig</th><th>ETA (geschatte aankomst ...</th>
          <th>Restere...</th><th>Routeaf...</th><th>Aankomst</th>
        </tr>
      </thead>
      <tbody>
        <tr className="h-[52px] whitespace-nowrap [&>td]:border-b-2 [&>td]:border-[#dcdde1] [&>td]:py-0 [&>td]:pl-[10px]">
          <td className="!pl-5">
            <div className="mt-1 flex h-[25px] w-[76px] items-center overflow-hidden rounded-[3px] bg-[#e1f1b6]">
              <span className="w-[49px] overflow-hidden">151/447</span>
              <span className="h-5 w-[25px] rounded-[3px] bg-[#ff9800] text-center font-medium leading-5 text-white">341</span>
            </div>
          </td>
          <td>294 Man CAMION</td>
          <td>
            <div className="flex items-center gap-[10px]">
              <span className="flex h-[30px] w-[30px] items-center justify-center rounded bg-[#97cb03] text-white"><Truck className="h-[18px] w-5" /></span>
              <span className="font-bold">CAMION SC 294...</span>
            </div>
          </td>
          <td>-</td><td>-</td><td>83790.8...</td><td>-</td>
        </tr>
      </tbody>
    </table>
  );
}

function LegTable() {
  const line = "[&>*:nth-child(n+7)]:border-l";
  return (
    <table className="w-[1050px] table-fixed border-separate border-spacing-0 text-left text-[15px] text-[#4a4f54]">
      <colgroup>
        <col className="w-[46px]" /><col className="w-[33px]" /><col className="w-[27px]" /><col className="w-[86px]" /><col className="w-[82px]" />
        <col className="w-[58px]" /><col className="w-[186px]" /><col className="w-[63px]" /><col className="w-[210px]" /><col className="w-[63px]" /><col className="w-[196px]" />
      </colgroup>
      <thead>
        <tr className={`h-[50px] whitespace-nowrap text-[#3d4247] [&>*]:border-b [&>*]:border-[#d8dae2] [&>*]:font-normal ${line}`}>
          <td /><td /><td />
          <th className="pl-[17px]">Status</th><th className="pl-[9px]">Order</th><th className="pl-[6px]">Type</th>
          <th className="pl-[10px]">distance_and_driving...</th><th className="pl-[10px]">Laa...</th><th className="pl-[10px]">PTA</th>
          <th className="pl-[10px]">Ge...</th><th className="pl-[10px]">Volume</th>
        </tr>
      </thead>
      <tbody>
        {legs.map((r) => (
          <tr key={r.n} className={`h-[50px] whitespace-nowrap bg-[#f1f7dd] [&>td]:border-b [&>td]:border-[#d8dae2] ${line}`}>
            <td><DragArrows className="ml-[26px] h-5 w-[10px] text-[#b0b3b6]" /></td>
            <td className="text-center">{r.n}</td>
            <td><span className="ml-[11px] block h-[2px] w-3 bg-[#b0b3b6]" /></td>
            <td className="pl-2">Ongepland</td>
            <td className="pl-[9px]">ID-2383</td>
            <td><VanLeft className="ml-4 h-[17px] w-5 text-[#b4b7ba]" /></td>
            <td className="pl-[10px]">
              <span className="flex items-center">
                <MdAdd size={29} className="text-[#b0b3b6]" />
                <span className="ml-[2px]">{r.dist}</span>
              </span>
            </td>
            <td className="pl-[10px]"><span className="mr-[13px]">-</span><span>-</span></td>
            <td className="pl-[10px]"><span className="inline-block w-[61px]">-</span><span>{r.at}</span></td>
            <td className="pr-[10px] text-right">-</td>
            <td />
          </tr>
        ))}
        <tr className="h-[50px] bg-[#f1f7dd]"><td colSpan={11} /></tr>
      </tbody>
    </table>
  );
}

function Caret({ dir }: { dir: "up" | "down" | "left" | "right" }) {
  const d = { up: "M0 5h6L3 0z", down: "M0 0h6L3 5z", left: "M5 0v6L0 3z", right: "M0 0v6l5-3z" }[dir];
  return <svg viewBox="0 0 6 6" className="h-[6px] w-[6px] shrink-0" aria-hidden="true"><path d={d} fill="#85898c" /></svg>;
}

function RoutePanel() {
  return (
    <section className="relative flex min-w-0 flex-[906] flex-col border-x border-b border-[#dcdde1] bg-white">
      <div className="flex min-h-0 flex-1">
        <div className="relative min-w-0 flex-1 overflow-hidden bg-[#f3f3f3]">
          <button className="flex h-[76px] w-full items-center gap-4 border-b border-[#dcdde1] bg-white pl-[21px] text-left text-[17px] text-[#3d4247]">
            <ChevronLeft size={28} strokeWidth={2.5} className="text-[#797d80]" />
            Terug naar alle bestuurders
          </button>
          <div className="bg-white"><DriverTable /></div>
          <button className="flex h-[60px] w-full items-center gap-1 bg-[#f3f3f3] pl-[24px] text-left text-[17px] font-bold text-[#1485d3]">
            <MdAdd size={30} className="text-[#797d80]" />
            Nieuwe routelijn
          </button>

          <div className="flex h-[50px] items-center whitespace-nowrap border border-l-0 border-[#dcdde1] bg-white pl-[25px] text-[17px]">
            <button aria-label="Inklappen"><ChevronDown size={21} strokeWidth={2.5} className="text-[#797d80]" /></button>
            <span className="ml-[24px] h-[2px] w-3 bg-[#b0b3b6]" />
            <span className="ml-5 w-[142px] text-[#3d4247]">Woe 30 04 25</span>
            <span className="h-5 w-[25px] rounded-[3px] bg-[#ff9800] text-center text-[15px] font-medium leading-5 text-white">13</span>
            <span className="ml-5 flex h-[34px] items-center gap-[6px] rounded bg-[#f3f3f3] pl-[13px] pr-3 text-[15px] text-[#4a4f54]">
              <Truck className="h-[18px] w-5" />CAMION SC 294
            </span>
            <span className="ml-auto text-[#1485d3]">32.37 EUR</span>
            <SmallPins className="ml-[18px] h-[14px] w-5 text-[#b0b3b6]" />
            <span className="ml-4 text-[#7b7f82]">293.7 km</span>
            <Timer className="ml-[14px] h-5 w-5 text-[#1485d3]" />
            <span className="ml-[6px] text-[#1485d3]">7h 40min</span>
            <button aria-label="Meer opties" className="-mr-[3px] ml-[5px]"><MdMoreVert size={30} className="text-[#b0b3b6]" /></button>
          </div>

          <div className="bg-[#f3f3f3] pl-[15px] pt-[15px]">
            <div className="border-l border-[#dcdde1]">
              <div className="mr-[15px] flex h-[51px] items-center gap-[14px] border-b-2 border-r border-t border-[#dcdde1] pl-[19px] text-[15px] text-[#4a4f54]">
                <MdFlag size={22} className="text-[#97cb03]" />
                <span>Bosstraat 3, 2960 Brecht, Belgium<span className="ml-[11px]">30.04.2025 06:00</span></span>
              </div>
              <LegTable />
            </div>
          </div>

          <div className="absolute bottom-0 left-[15px] right-[15px] flex h-[50px] items-center gap-[10px] border border-[#dcdde1] bg-white pl-5 pr-5">
            <button aria-label="Locatie" className="flex h-10 w-10 items-center justify-center rounded border border-[#dcdde1] text-[#797d80]"><MdLocationOn size={29} /></button>
            <button aria-label="Instellingen" className="ml-auto flex h-10 w-10 items-center justify-center rounded border border-[#bfc2c5] text-[#797d80]"><MdSettings size={21} /></button>
            <button aria-label="Route berekenen" className="flex h-10 w-10 items-center justify-center rounded bg-[#326fb6] text-white"><RouteLine className="h-[22px] w-[22px]" /></button>
            <button aria-label="Verzenden" className="flex h-10 w-10 items-center justify-center rounded bg-[#326fb6] text-white"><svg viewBox="0 0 22 20" className="h-5 w-[22px]" fill="currentColor" aria-hidden="true"><path d="M1 1l20 9-20 9v-6.5l11-2.5L1 7.5z" /></svg></button>
          </div>
        </div>
        <div className="flex w-[10px] flex-col items-center pt-[22px]">
          <Caret dir="up" />
          <div className="mt-1 h-11 w-[6px] rounded-full bg-[#85898c]" />
          <div className="mt-auto"><Caret dir="down" /></div>
        </div>
      </div>
      <div className="flex h-3 items-center pl-[3px] pr-[12px]">
        <Caret dir="left" />
        <div className="ml-[3px] h-[6px] w-[52%] rounded-full bg-[#85898c]" />
        <div className="ml-auto"><Caret dir="right" /></div>
      </div>
      <button aria-label="Paneel uitklappen" className="absolute -right-[15px] top-[330px] z-10 flex h-[55px] w-6 items-center justify-center rounded border border-[#dcdde1] bg-[#f3f3f3] text-[#797d80]">
        <ChevronsRight size={19} strokeWidth={1.8} />
      </button>
    </section>
  );
}

/* ---------- shell ---------- */

const navItems: { label: string; icon: React.ReactNode; active?: boolean }[] = [
  { label: "Kaart", icon: <MdMap size={30} /> },
  { label: "Rapporten", icon: <MdInsertDriveFile size={30} /> },
  { label: "Voertuigen", icon: <MdDirectionsCar size={30} /> },
  { label: "Bestuurders", icon: <MdAccountCircle size={30} /> },
  { label: "Dashboard", icon: <MdDashboard size={30} /> },
  { label: "Brandstof", icon: <FuelPump className="h-6 w-6" /> },
  { label: "Meldingen", icon: <MdNewReleases size={29} /> },
  { label: "Routeplanning", icon: <RoutePins className="h-[27px] w-[30px]" />, active: true },
  { label: "Berichten", icon: <Messages className="h-[26px] w-[26px]" /> },
  { label: "Reservaties", icon: <CarCalendar className="h-[26px] w-6" /> },
  { label: "Instellingen", icon: <MdSettings size={29} /> },
  { label: "Extra", icon: <PuzzlePlus className="h-[25px] w-[25px]" /> },
];

export default function App() {
  return (
    <div className="flex h-screen flex-col overflow-hidden bg-[#f3f3f3] font-['Inter',sans-serif]">
      <header className="flex h-[79px] shrink-0 items-start border-b border-[#dcdde1] bg-white pl-[22px] pr-[17px]">
        <a href="#home" className="mt-[13px] flex gap-[11px]">
          <LogoMark />
          <span className="flex w-[205px] flex-col whitespace-nowrap font-['Lato',sans-serif]">
            <span className="flex items-baseline text-[#0b78c4]">
              <span className="font-['Inter',sans-serif] text-[33px] font-light leading-[29px]">FLEET.</span>
              <span className="ml-[5px] text-[26px] font-medium leading-[29px]">connect</span>
            </span>
            <span className="text-[18px] font-bold leading-5 text-[#12303f]">powered by All-Connects</span>
          </span>
        </a>
        <button aria-label="Instellingen" className="ml-[50px] mt-[21px] text-[#797d80]"><MdSettings size={30} /></button>
        <div className="ml-auto mt-[21px] flex items-start text-[#797d80]">
          <button aria-label="Help" className="mr-[50px]"><MdHelpOutline size={30} /></button>
          <button aria-label="Notificaties" className="mr-[50px]"><MdNotifications size={30} /></button>
          <button className="flex items-start gap-[23px] text-left" aria-label="Account">
            <MdAccountCircle size={30} />
            <span className="flex w-[197px] flex-col whitespace-nowrap">
              <span className="text-[18px] leading-5">Larob Guido</span>
              <span className="text-[12px] leading-4">Tian Holding (Gyma - Alu Coati...</span>
            </span>
          </button>
          <button aria-label="Menu" className="ml-1 mt-[2px]"><MdMenu size={30} /></button>
        </div>
      </header>

      <div className="flex min-h-0 flex-1">
        <nav className="flex w-[67px] shrink-0 flex-col bg-[#384047] pt-[5px] text-[#999c9e]">
          {navItems.map((n) => (
            <a
              key={n.label}
              href="#nav"
              aria-label={n.label}
              className={n.active ? "flex h-[60px] items-center justify-center bg-[#262d30] pr-[3px] text-white" : "flex h-[60px] items-center justify-center pr-[3px]"}
            >
              {n.icon}
            </a>
          ))}
          <button aria-label="Menu uitklappen" className="mt-auto flex h-[58px] items-center justify-center bg-gradient-to-b from-[#384047] to-black pr-[2px] text-[#c3c6c8]">
            <ChevronsRight size={28} strokeWidth={2} />
          </button>
        </nav>

        <main className="flex min-w-0 flex-1 flex-col pb-[33px] pl-[30px]">
          <div className="mr-[37px] flex h-[81px] shrink-0 items-end border-b border-[#dcdde1]">
            <div role="tablist" className="-mb-px flex h-[52px] text-[18px] text-[#7b7f82]">
              <button role="tab" aria-selected="true" className="border border-b-0 border-[#dcdde1] bg-white px-[18px] text-[#3d4247]">Routeplanning</button>
              <button role="tab" aria-selected="false" className="px-[19px]">Niet-toegewezen orders</button>
              <button role="tab" aria-selected="false" className="px-[19px]">Mijn klanten</button>
              <button role="tab" aria-selected="false" className="px-[19px]">Archive</button>
            </div>
            <div className="mb-[18px] ml-auto flex h-10 gap-[10px] text-[17px] font-semibold">
              <button className="mr-[3px] flex items-center gap-[9px] rounded bg-[#dcdde1] px-[15px] font-bold text-[#4a4f54]">
                <MdInfo size={31} className="text-[#797d80]" />INSTRUCTIES
              </button>
              <button className="rounded bg-[#326fb6] px-4 text-white">Importeren</button>
              <button className="rounded bg-[#326fb6] px-[17px] text-white">Voeg leveradres toe</button>
              <button className="rounded bg-[#326fb6] px-[17px] text-white">Voeg ophaal-leveradres toe</button>
            </div>
          </div>
          <div className="mr-[37px] flex min-h-0 flex-1 gap-[5px]">
            <RoutePanel />
            <MapPanel />
          </div>
        </main>
        <div className="-ml-[7px] flex w-[7px] flex-col justify-between py-[2px]"><Caret dir="up" /><Caret dir="down" /></div>
      </div>
    </div>
  );
}
